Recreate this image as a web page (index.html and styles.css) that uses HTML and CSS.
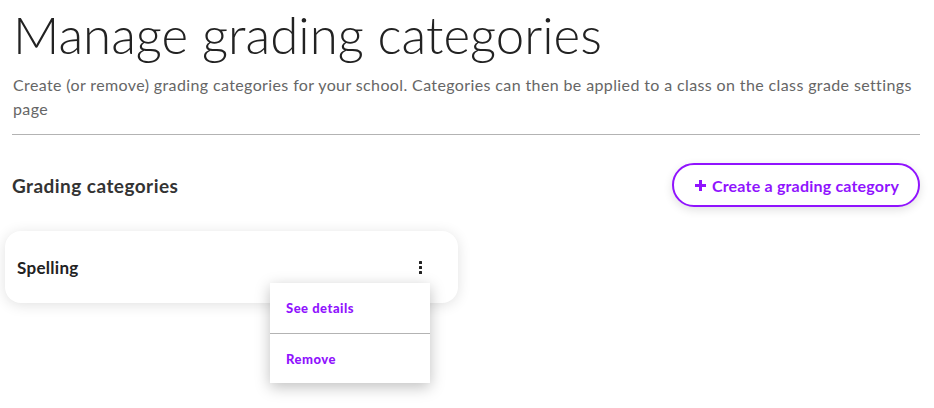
FILE: index.html
```html
<!DOCTYPE html>
<html lang="en">
<head>
<meta charset="utf-8">
<title>Manage grading categories</title>
<link rel="stylesheet" href="styles.css">
</head>
<body>
<main class="page">
  <header class="page-header">
    <h1 class="page-title">Manage grading categories</h1>
    <p class="page-intro">Create (or remove) grading categories for your school. Categories can then be applied to a class on the class grade settings page</p>
  </header>
  <section class="section">
    <div class="section-bar">
      <h2 class="section-title">Grading categories</h2>
      <button class="btn-create" type="button">
        <svg class="plus" width="11" height="11" viewBox="0 0 11 11" aria-hidden="true"><rect x="4" y="0" width="3" height="11" fill="currentColor"/><rect x="0" y="4" width="11" height="3" fill="currentColor"/></svg>
        Create a grading category
      </button>
    </div>
    <div class="card-list">
      <div class="card">
        <span class="card-name">Spelling</span>
        <button class="kebab" type="button" aria-label="More options">
          <span class="dot"></span><span class="dot"></span><span class="dot"></span>
        </button>
        <div class="menu">
          <a class="menu-item" href="#">See details</a>
          <a class="menu-item" href="#">Remove</a>
        </div>
      </div>
    </div>
  </section>
</main>
</body>
</html>
```
FILE: styles.css
```css
* { box-sizing: border-box; }
html, body { margin: 0; padding: 0; background: #fff; }
body {
  min-height: 408px;
  font-family: Lato, "Noto Sans", "Liberation Sans", sans-serif;
  color: #333;
}
.page {
  width: 920px;
  min-height: 408px;
  padding: 0 0 0 12px;
}
.page-header {
  border-bottom: 1px solid #b3b3b3;
  padding-top: 5px;
  padding-bottom: 13px;
}
.page-title {
  margin: 0 0 0 1px;
  font-size: 51px;
  font-weight: 300;
  line-height: 60px;
  color: #222;
}
.page-intro {
  margin: 8px 0 0 1px;
  font-size: 16px;
  line-height: 24px;
  letter-spacing: 0.38px;
  color: #666;
}
.section-bar {
  display: flex;
  align-items: center;
  justify-content: space-between;
  margin-top: 28px;
}
.section-title {
  margin: 0;
  font-size: 19px;
  font-weight: 700;
  letter-spacing: 0.45px;
  color: #333;
}
.btn-create {
  width: 248px;
  height: 44px;
  border: 2px solid #9013fe;
  border-radius: 22px;
  background: #fff;
  color: #9013fe;
  font-family: inherit;
  font-size: 16px;
  font-weight: 700;
  letter-spacing: 0.2px;
  display: flex;
  align-items: center;
  justify-content: center;
  gap: 6px;
  padding: 0 0 0 2px;
  box-shadow: 0 3px 10px rgba(0,0,0,0.12);
  cursor: pointer;
}
.plus { display: block; flex: none; }
.card-list {
  margin-top: 24px;
  margin-left: -7px;
}
.card {
  position: relative;
  width: 453px;
  height: 72px;
  border-radius: 16px;
  background: #fff;
  box-shadow: 0 2px 14px rgba(0,0,0,0.12);
  display: flex;
  align-items: center;
  justify-content: space-between;
  padding: 0 36px 0 12px;
}
.card-name {
  font-size: 17px;
  font-weight: 700;
  letter-spacing: 0.3px;
  color: #222;
}
.kebab {
  border: 0;
  background: none;
  padding: 0;
  display: flex;
  flex-direction: column;
  gap: 2px;
  cursor: pointer;
}
.dot { width: 3px; height: 3px; background: #222; border-radius: 0.5px; }
.menu {
  position: absolute;
  left: 265px;
  top: 52px;
  width: 160px;
  background: #fff;
  box-shadow: 0 4px 14px rgba(0,0,0,0.25);
  display: flex;
  flex-direction: column;
  z-index: 2;
}
.menu-item {
  height: 50px;
  display: flex;
  align-items: center;
  padding-left: 16px;
  font-size: 13px;
  font-weight: 900;
  letter-spacing: 0.5px;
  color: #9013fe;
  text-decoration: none;
}
.menu-item + .menu-item { border-top: 1px solid #b3b3b3; }
```
